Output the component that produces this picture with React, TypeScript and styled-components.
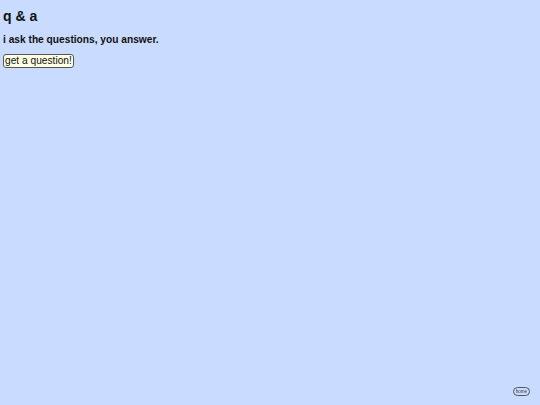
import styled, { createGlobalStyle } from 'styled-components';

const Global = createGlobalStyle`
  html, body {
    margin: 0;
    padding: 0;
    background: #c9dcff;
    min-height: 100%;
  }
  body {
    font-family: 'Liberation Sans', Arial, sans-serif;
    color: #111;
  }
`;

const Page = styled.div`
  display: flex;
  flex-direction: column;
  align-items: flex-start;
  padding: 9px 3px;
  height: 405px;
  box-sizing: border-box;
`;

const Title = styled.h1`
  margin: 0;
  font-size: 14px;
  font-weight: bold;
  line-height: 14px;
`;

const Subtitle = styled.h2`
  margin: 11px 0 0;
  font-size: 10.2px;
  font-weight: bold;
  line-height: 12px;
`;

const AskButton = styled.button`
  margin-top: 8px;
  font-family: 'Liberation Sans', Arial, sans-serif;
  font-size: 10.2px;
  line-height: 10px;
  padding: 1px 1px;
  background: #ffffe6;
  color: #111;
  border: 1px solid #555;
  border-radius: 3px;
  cursor: pointer;
`;

const HomeButton = styled.button`
  position: fixed;
  right: 10px;
  bottom: 9px;
  font-family: 'Liberation Sans', Arial, sans-serif;
  font-size: 4.5px;
  line-height: 5px;
  padding: 1px 2px;
  background: transparent;
  color: #333;
  border: 1px solid #555;
  border-radius: 5px;
`;

const App = () => {
  return (
    <>
      <Global />
      <Page>
        <Title>q &amp; a</Title>
        <Subtitle>i ask the questions, you answer.</Subtitle>
        <AskButton>get a question!</AskButton>
      </Page>
      <HomeButton>home</HomeButton>
    </>
  );
};

export default App;
